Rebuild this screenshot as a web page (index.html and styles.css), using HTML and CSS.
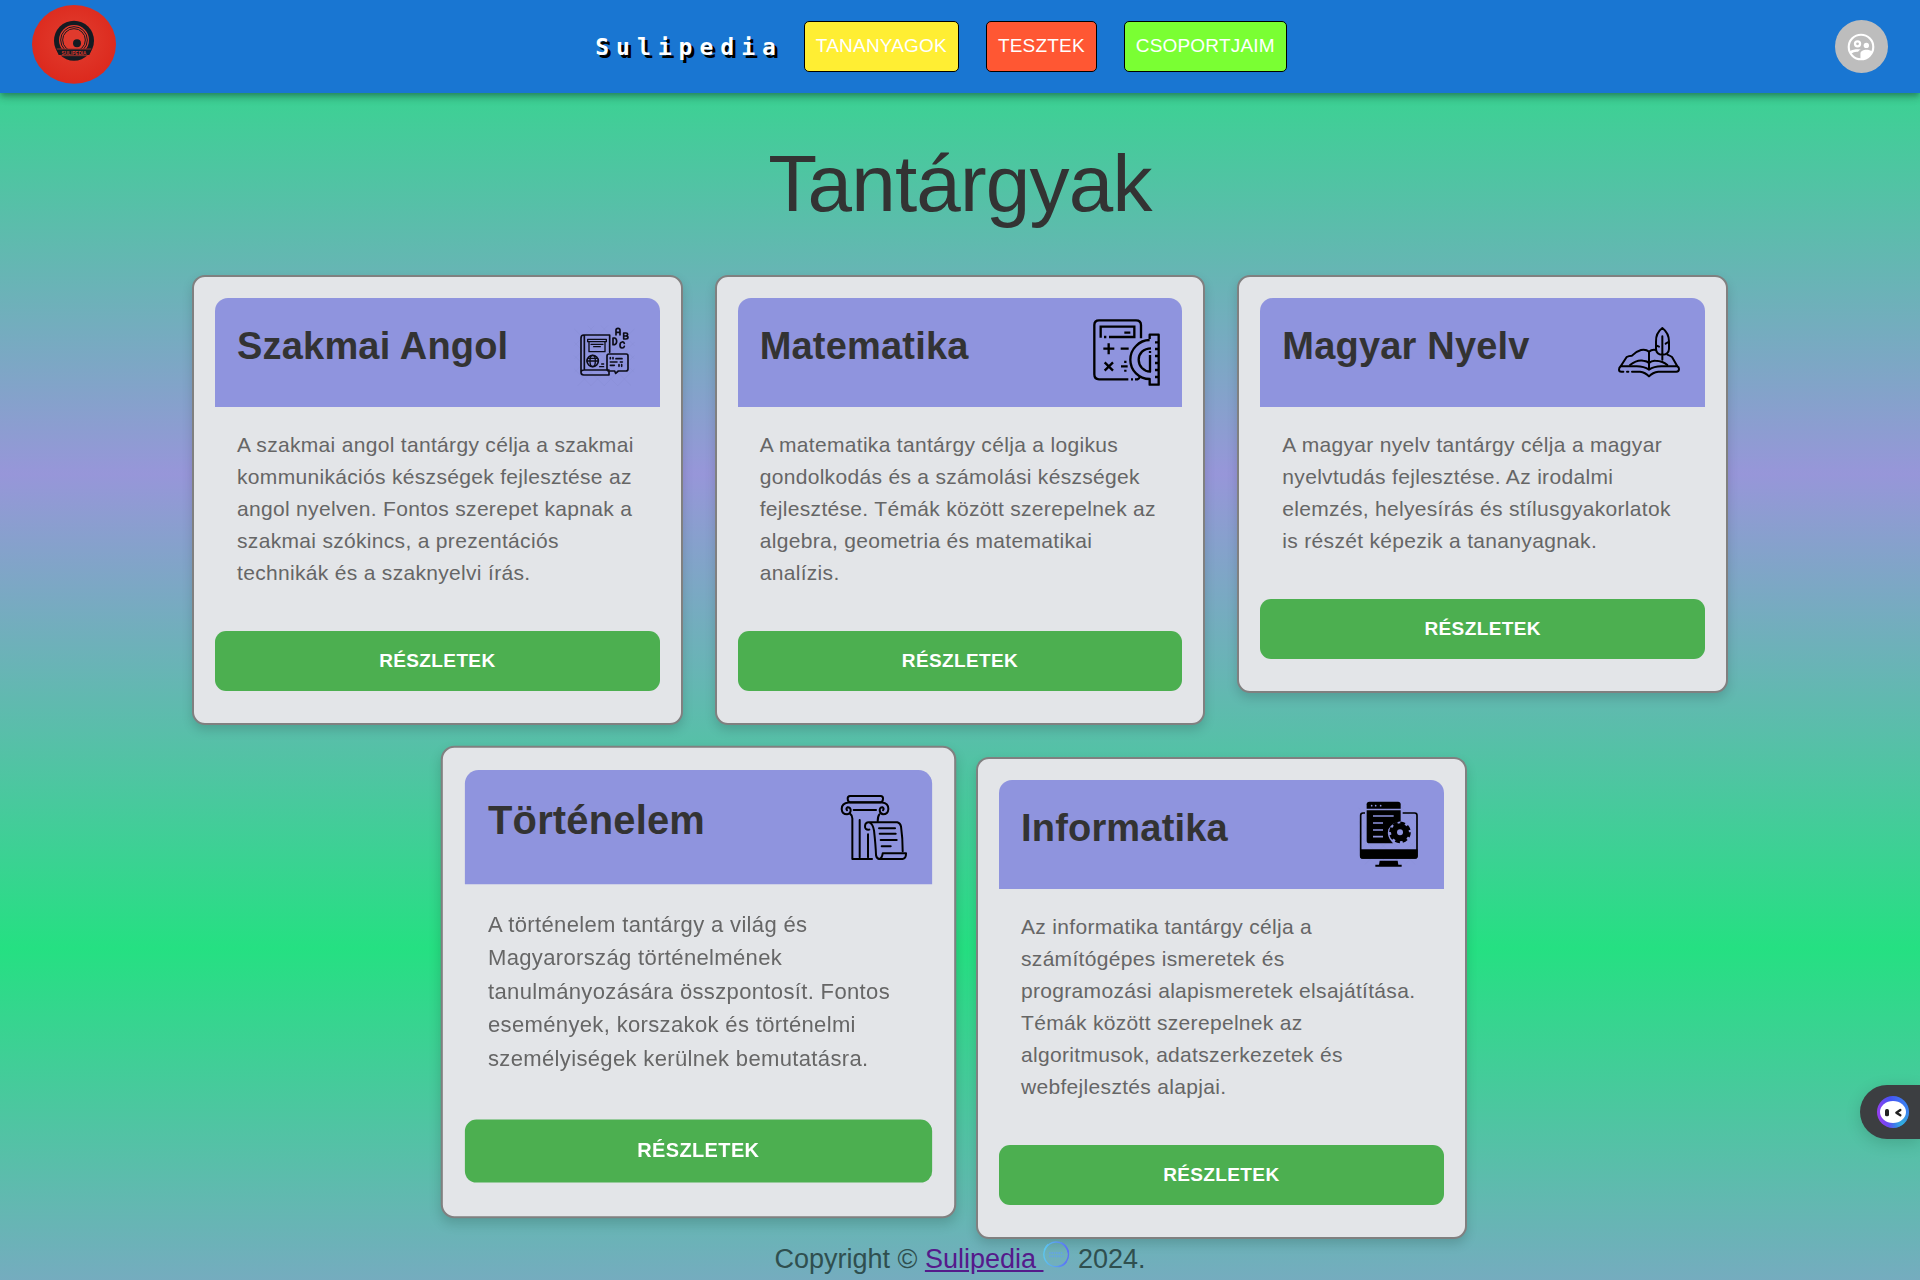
FILE: index.html
```html
<!DOCTYPE html>
<html lang="hu">
<head>
  <meta charset="utf-8">
  <meta name="viewport" content="width=device-width, initial-scale=1">
  <title>Sulipedia</title>
  <link rel="stylesheet" href="styles.css">
</head>
<body>
  <header class="topbar">
    <a class="logo" href="#" aria-label="Sulipedia">
      <svg viewBox="0 0 252 237" preserveAspectRatio="none">
        <defs>
          <radialGradient id="logo-red" cx="50%" cy="45%" r="55%">
            <stop offset="0" stop-color="#e23e30"/>
            <stop offset="1" stop-color="#dc291d"/>
          </radialGradient>
        </defs>
        <ellipse cx="126" cy="118" rx="126" ry="118" fill="url(#logo-red)"/>
        <circle cx="126" cy="107" r="60" fill="#141b22"/>
        <circle cx="126" cy="105" r="45" fill="#e03a2d"/>
        <g fill="none" stroke="#141b22" stroke-width="3">
          <circle cx="126" cy="105" r="40"/>
          <circle cx="126" cy="105" r="34"/>
        </g>
        <circle cx="135" cy="115" r="12" fill="#141b22"/>
        <path d="M72 131H180L172 150H80Z" fill="#141b22"/>
        <path d="M74 132H178M80 152H172" stroke="#e03a2d" stroke-width="2"/>
        <text x="126" y="149" text-anchor="middle" class="logo-text">SULIPEDIA</text>
      </svg>
    </a>
    <nav class="nav">
      <a class="brand" href="#">Sulipedia</a>
      <div class="nav-buttons">
        <button type="button" class="nav-button nav-button-yellow">TANANYAGOK</button>
        <button type="button" class="nav-button nav-button-red">TESZTEK</button>
        <button type="button" class="nav-button nav-button-green">CSOPORTJAIM</button>
      </div>
    </nav>
    <button type="button" class="avatar" aria-label="Profil">
      <svg viewBox="0 0 24 24" width="32" height="32">
        <circle cx="12" cy="12" r="9.2" fill="none" stroke="#fff" stroke-width="1.6"/>
        <circle cx="9.4" cy="9.6" r="1.9" fill="none" stroke="#fff" stroke-width="1.7"/>
        <circle cx="16" cy="10.8" r="2" fill="#fff"/>
        <path d="M3.6 15.2C5.2 14 7.600 13.600 9.600 13.600L11.800 13.900Q10.300 14.600 9.800 15.600C7.600 15.400 6 16 4.800 17Z" fill="#fff"/>
        <path d="M11.600 21.200V16.800C11.600 15 14 14.100 16 14.100C17.600 14.100 19.400 14.600 20.400 15.400C19 19 16 21.400 11.600 21.200Z" fill="#fff"/>
      </svg>
    </button>
  </header>

  <main class="page">
    <h1 class="page-title">Tantárgyak</h1>
    <div class="cards">
      <article class="card">
        <div class="card-header">
          <h2 class="card-title">Szakmai Angol</h2>
          <svg class="card-icon" viewBox="0 0 201 201" aria-hidden="true">
            <path d="M10 30L180 200M10 70L140 200M10 110L100 200M10 150L60 200M50 20L190 160M90 20L190 120M130 20L190 80M190 30L20 200M190 70L60 200M190 110L100 200M190 150L140 200M150 20L10 160M110 20L10 120M70 20L10 80" stroke="#868bd0" stroke-width="1"/>
            <g fill="none" stroke="#0c0c18" stroke-width="5" stroke-linecap="round" stroke-linejoin="round">
              <path d="M116 100V48H38Q30 48 30 57V160Q30 168 38 168H114V158M30 158Q32 153 40 153H114M40 49V152"/>
              <path d="M50 61H106V68H50ZM54 69V98H102V69M60 76H96M68 83H88" stroke-width="4"/>
              <circle cx="65" cy="126" r="17"/>
              <ellipse cx="65" cy="126" rx="8" ry="17" stroke-width="4"/>
              <path d="M48 126H82M50 118H80M86 143H98M92 135H98" stroke-width="4"/>
              <path d="M114 105H166Q171 105 171 111V150Q171 156 165 156H142L134 163L131 156H114Q108 156 108 150V111Q108 105 114 105Z"/>
              <path d="M118 116V119M126 116V119M135 119H153M118 129H138M148 129H154M118 139H130M144 137V142M152 137V142"/>
              <path d="M135 48V34Q135 28 141 28Q147 28 147 34V48M135 40H147"/>
              <path d="M158 42V60H165Q171 60 171 55Q171 51 165 51Q170 50 170 46Q170 42 165 42ZM158 51H165"/>
              <path d="M126 57V77H131Q137 75 137 67Q137 59 131 57Z"/>
              <path d="M160 73Q158 68 153 69Q147 70 147 79Q147 87 153 87Q159 87 160 82"/>
            </g>
          </svg>
        </div>
        <p class="card-text">A szakmai angol tantárgy célja a szakmai kommunikációs készségek fejlesztése az angol nyelven. Fontos szerepet kapnak a szakmai szókincs, a prezentációs technikák és a szaknyelvi írás.</p>
        <button type="button" class="card-button">RÉSZLETEK</button>
      </article>

      <article class="card">
        <div class="card-header">
          <h2 class="card-title">Matematika</h2>
          <svg class="card-icon" viewBox="0 0 201 201" aria-hidden="true">
            <g fill="none" stroke="#000" stroke-width="7" stroke-linejoin="round">
              <path d="M144 58V18Q144 4 129 4H18Q4 4 4 18V166Q4 181 18 181H106M114 181H120M126 181H133Q138 179 141 174"/>
              <path d="M23 56V23H124V54H48M33 54H40M94 41H112" stroke-linejoin="miter"/>
              <path d="M47 73V106M31 89H64M83 89H107M35 130L60 155M60 130L35 155M84 142H104M97 125V132M97 152V158"/>
              <path d="M170 60V47H197V197H170V180Q146 180 129 163Q112 146 112 122Q112 98 129 81Q146 63 170 63"/>
              <path d="M174 88Q158 88 147 98Q137 108 137 122Q137 136 147 147Q158 158 171 158V108M171 96V102"/>
              <path d="M186 70H198M186 90H198M186 111H198M186 132H198M186 153H198M186 174H198"/>
            </g>
          </svg>
        </div>
        <p class="card-text">A matematika tantárgy célja a logikus gondolkodás és a számolási készségek fejlesztése. Témák között szerepelnek az algebra, geometria és matematikai analízis.</p>
        <button type="button" class="card-button">RÉSZLETEK</button>
      </article>

      <article class="card">
        <div class="card-header">
          <h2 class="card-title">Magyar Nyelv</h2>
          <svg class="card-icon" viewBox="0 0 201 201" aria-hidden="true">
            <g fill="none" stroke="#000" stroke-width="6" stroke-linecap="round" stroke-linejoin="round">
              <path d="M99 152V98Q90 90 75 93Q58 98 48 110Q38 110 32 114L14 142H62Q84 142 99 152Q114 142 136 142H184L168 114Q162 110 154 107"/>
              <path d="M99 98Q107 91 119 93M42 138Q62 122 82 125Q94 126 99 132Q107 124 118 125Q142 126 154 138"/>
              <path d="M14 142Q9 146 9 152Q9 158 16 158H22M33 158H37M48 158H72Q88 160 99 172Q110 160 127 158H181Q189 158 189 150Q189 144 184 142"/>
              <path d="M139 27Q119 42 120 68V90Q121 107 139 107Q158 107 159 90V68Q159 42 139 27ZM139 52V122M122 80L129 83M157 69L149 74"/>
            </g>
          </svg>
        </div>
        <p class="card-text">A magyar nyelv tantárgy célja a magyar nyelvtudás fejlesztése. Az irodalmi elemzés, helyesírás és stílusgyakorlatok is részét képezik a tananyagnak.</p>
        <button type="button" class="card-button">RÉSZLETEK</button>
      </article>

      <article class="card card-raised">
        <div class="card-header">
          <h2 class="card-title">Történelem</h2>
          <svg class="card-icon" viewBox="0 0 211 211" aria-hidden="true">
            <g fill="none" stroke="#000" stroke-width="6" stroke-linecap="round" stroke-linejoin="round">
              <path d="M34 12H126Q133 12 133 20Q133 30 126 31H34Q27 30 27 20Q27 12 34 12Z"/>
              <path d="M30 32Q9 34 9 51Q10 67 25 67Q36 65 36 54Q35 45 26 46Q21 49 25 55M130 32Q149 34 149 51Q148 67 133 67Q123 65 123 54Q124 45 132 46Q137 49 133 55M45 54H112M30 32H130"/>
              <path d="M34 65Q41 70 41 80V201H100M122 67Q117 73 117 88M63 84V196M88 127V196"/>
              <path d="M92 113Q78 115 79 102Q80 90 92 91H176Q185 93 187 104Q192 138 192 178M92 91Q103 96 106 116Q111 160 112 190Q114 201 122 201M121 109H169M123 125H171M126 144H174M129 163H156"/>
              <path d="M122 201H192Q202 200 202 184H132Q130 199 122 201"/>
            </g>
          </svg>
        </div>
        <p class="card-text">A történelem tantárgy a világ és Magyarország történelmének tanulmányozására összpontosít. Fontos események, korszakok és történelmi személyiségek kerülnek bemutatásra.</p>
        <button type="button" class="card-button">RÉSZLETEK</button>
      </article>

      <article class="card">
        <div class="card-header">
          <h2 class="card-title">Informatika</h2>
          <svg class="card-icon" viewBox="0 0 201 201" aria-hidden="true">
            <path d="M10 20L180 190M10 60L140 190M10 100L100 190M10 140L60 190M50 10L190 150M90 10L190 110M130 10L190 70M190 30L30 190M190 70L70 190M190 110L110 190M190 150L150 190M150 10L10 150M110 10L10 110M70 10L10 70" stroke="#868bd0" stroke-width="1"/>
            <path d="M35 23V10Q35 2 43 2H129Q137 2 137 10V23Z"/>
            <path d="M35 28H137V61Q112 64 100 85Q95 105 109 121L114 127H43Q35 127 35 119Z"/>
            <path d="M30 36H24Q17 36 17 43V164Q17 171 24 171H179Q186 171 186 164V43Q186 36 179 36H143" fill="none" stroke="#000" stroke-width="5"/>
            <path d="M15 145H188V164Q188 173 179 173H24Q15 173 15 164Z"/>
            <path d="M74 179H128L130 191H140V197H61V191H72Z"/>
            <circle cx="50" cy="14" r="2.500" fill="#8f94de"/>
            <circle cx="62" cy="14" r="2.500" fill="#8f94de"/>
            <circle cx="77" cy="14" r="2.500" fill="#8f94de"/>
            <path d="M54 45H116M54 66H84M54 87H84M54 107H84" stroke="#8f94de" stroke-width="5"/>
            <circle cx="135" cy="94" r="27"/>
            <circle cx="135" cy="94" r="28" fill="none" stroke="#000" stroke-width="9" stroke-dasharray="14 8"/>
            <circle cx="135" cy="94" r="9" fill="#8f94de"/>
          </svg>
        </div>
        <p class="card-text">Az informatika tantárgy célja a számítógépes ismeretek és programozási alapismeretek elsajátítása. Témák között szerepelnek az algoritmusok, adatszerkezetek és webfejlesztés alapjai.</p>
        <button type="button" class="card-button">RÉSZLETEK</button>
      </article>
    </div>
  </main>

  <footer class="footer">Copyright © <a class="footer-link" href="#">Sulipedia </a><svg class="footer-icon" viewBox="0 0 81 81" aria-hidden="true">
      <defs>
        <linearGradient id="ring" x1="0" x2="1" y1="0" y2="0">
          <stop offset="0" stop-color="#5cc8f0"/>
          <stop offset="1" stop-color="#5b6df5"/>
        </linearGradient>
      </defs>
      <path fill-rule="evenodd" fill="url(#ring)" d="M40 1A39 39 0 1 1 39 1ZM38 5A35 35 0 1 0 41 5Z"/>
      <path d="M54 5Q72 14 76 34M46 77Q62 75 70 62M4 28Q8 16 16 10" fill="none" stroke="url(#ring)" stroke-width="5"/>
      <path d="M18 36H58M18 46H62" stroke="#66a6dd" stroke-width="6" stroke-dasharray="5 2"/>
    </svg> 2024.</footer>

  <button type="button" class="assistant" aria-label="Asszisztens">
    <svg viewBox="0 0 96 96" width="32" height="32">
      <defs>
        <linearGradient id="bot" x1="0" x2="1" y1="0.600" y2="0.400">
          <stop offset="0" stop-color="#9a3df0"/>
          <stop offset="0.500" stop-color="#4553f5"/>
          <stop offset="1" stop-color="#3a86f0"/>
        </linearGradient>
        <radialGradient id="bot-cyan" cx="80%" cy="88%" r="45%">
          <stop offset="0" stop-color="#2fb4dc"/>
          <stop offset="1" stop-color="#2fb4dc" stop-opacity="0"/>
        </radialGradient>
      </defs>
      <circle cx="48" cy="48" r="48" fill="url(#bot)"/>
      <circle cx="48" cy="48" r="48" fill="url(#bot-cyan)"/>
      <ellipse cx="48" cy="48" rx="39" ry="33" fill="#fff"/>
      <rect x="24" y="39" width="12" height="22" rx="5" fill="#222"/>
      <path d="M70 42L58 50L70 58" fill="none" stroke="#222" stroke-width="7" stroke-linecap="round" stroke-linejoin="round"/>
    </svg>
  </button>
</body>
</html>
```
FILE: styles.css
```css
* {
  box-sizing: border-box;
}

body {
  margin: 0;
  min-height: 100vh;
  font-family: "Liberation Sans", Arial, sans-serif;
  background: repeating-linear-gradient(#25e082 0, #9796d9 474px, #25e082 948px);
}

button {
  font-family: inherit;
  cursor: pointer;
}

/* Top bar */
.topbar {
  position: relative;
  display: grid;
  grid-template-columns: 1fr auto 1fr;
  align-items: center;
  height: 93px;
  padding: 0 32px;
  background: #1976d2;
  box-shadow: 0 3px 5px -1px rgba(0, 0, 0, 0.2), 0 5px 7px rgba(0, 0, 0, 0.14), 0 1px 13px rgba(0, 0, 0, 0.12);
}

.logo {
  align-self: start;
  width: 84px;
  height: 79px;
  margin-top: 5px;
}

.logo svg {
  display: block;
  width: 100%;
  height: 100%;
}

.logo-text {
  font-family: "Liberation Sans", Arial, sans-serif;
  font-size: 14px;
  font-weight: bold;
  fill: #d9382c;
}

.nav {
  display: flex;
  align-items: center;
  gap: 21px;
  padding-right: 38px;
}

.brand {
  font-family: "DejaVu Sans Mono", monospace;
  font-size: 23px;
  font-weight: bold;
  line-height: 40px;
  letter-spacing: 7px;
  color: #fff;
  text-decoration: none;
  text-shadow: 3px 3px 0 #000;
}

.nav-buttons {
  display: flex;
  gap: 27px;
}

.nav-button {
  height: 51px;
  padding: 0 11px 2px;
  border: 1px solid #000;
  border-radius: 5px;
  font-size: 19px;
  letter-spacing: 0.01em;
  color: #fff;
}

.nav-button-yellow {
  background: #ffee33;
}

.nav-button-red {
  background: #ff5733;
}

.nav-button-green {
  background: #7aff33;
}

.avatar {
  display: flex;
  align-items: center;
  justify-content: center;
  justify-self: end;
  width: 53px;
  height: 53px;
  padding: 0 2px 0 0;
  border: 0;
  border-radius: 50%;
  background: #bdbdbd;
}

/* Subjects */
.page {
  width: 80%;
  margin: 0 auto;
  padding-top: 43px;
}

.page-title {
  margin: 0 0 43px;
  font-size: 80px;
  font-weight: normal;
  line-height: 96px;
  letter-spacing: -0.01em;
  text-align: center;
  color: #333;
}

.cards {
  display: flex;
  flex-wrap: wrap;
  align-items: flex-start;
  justify-content: center;
  gap: 32px;
}

.card {
  width: calc((100% - 64px) / 3);
  padding: 21px 21px 32px;
  border: 2px solid #808080;
  border-radius: 13px;
  background: #e3e5e8;
  box-shadow: 0 5px 11px rgba(0, 0, 0, 0.15);
}

.card-raised {
  transform: scale(1.05);
}

.card-header {
  display: flex;
  align-items: center;
  justify-content: space-between;
  padding: 21px 22px;
  border-radius: 13px 13px 0 0;
  background: #8f94de;
}

.card-title {
  margin: 0 0 13px;
  font-size: 38px;
  line-height: 44px;
  letter-spacing: 0.005em;
  color: #333;
}

.card-icon {
  width: 67px;
  height: 67px;
}

.card-text {
  margin: 0;
  padding: 22px 24px 42px 22px;
  font-size: 21px;
  line-height: 32px;
  letter-spacing: 0.015em;
  color: #666;
}

.card-button {
  display: block;
  width: 100%;
  height: 60px;
  padding: 0;
  border: 0;
  border-radius: 11px;
  font-size: 19px;
  font-weight: bold;
  letter-spacing: 0.02em;
  color: #fff;
  background: #4caf50;
}

/* Footer */
.footer {
  font-size: 27px;
  line-height: 40px;
  text-align: center;
  color: #2f4f4f;
}

.footer-link {
  color: #551a8b;
  white-space: pre;
}

.footer-icon {
  width: 27px;
  height: 27px;
}

/* Floating assistant tab */
.assistant {
  position: fixed;
  right: 0;
  bottom: 141px;
  display: flex;
  align-items: center;
  width: 60px;
  height: 54px;
  padding: 0 0 0 17px;
  border: 0;
  border-radius: 27px 0 0 27px;
  background: #3c3e41;
  box-shadow: 0 4px 16px rgba(0, 0, 0, 0.15);
}
```
